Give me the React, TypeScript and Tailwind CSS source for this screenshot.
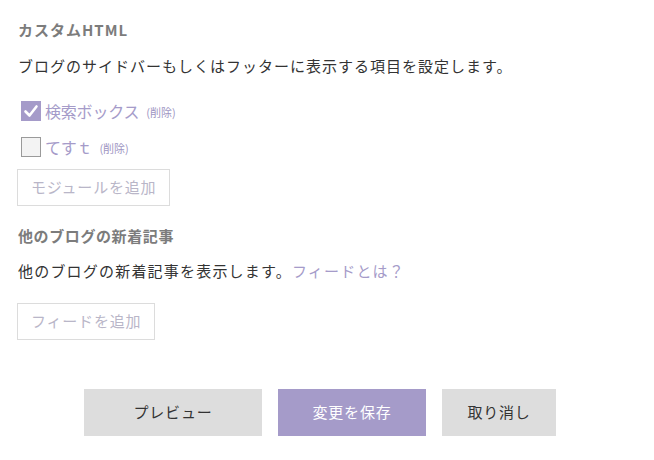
import React from "react";

const FONT = { fontFamily: '"Noto Sans CJK JP", "Noto Sans", sans-serif' };

function CheckRow({ label, checked }: { label: string; checked?: boolean }) {
  return (
    <div className="flex items-center h-[20px]">
      {checked ? (
        <span className="w-[20px] h-[20px] ml-[3px] bg-[#a59bc9] flex items-center justify-center">
          <svg width="16" height="16" viewBox="0 0 16 16">
            <path d="M2.5 8.5 L6.5 12.5 L13.5 3.5" fill="none" stroke="#fff" strokeWidth="2.6" strokeLinecap="round" strokeLinejoin="round" />
          </svg>
        </span>
      ) : (
        <span className="w-[20px] h-[20px] ml-[3px] bg-[#f3f3f3] border border-[#9a9a9a]" />
      )}
      <span className="ml-[4px] text-[16px] leading-[20px] text-[#a59bc9] tracking-[-0.2px]">{label}</span>
      <span className="ml-[7px] text-[11px] leading-[20px] text-[#9d94c2] mt-[2px]">(削除)</span>
    </div>
  );
}

export default function App() {
  return (
    <div className="w-[654px] h-[460px] bg-white px-[18px] flex flex-col" style={FONT}>
      <div className="mt-[20px] text-[15px] leading-[20px] font-bold tracking-[1px] text-[#7c7c7c]">カスタムHTML</div>
      <p className="mt-[16px] text-[15px] leading-[20px] tracking-[1px] text-[#333]">
        ブログのサイドバーもしくはフッターに表示する項目を設定します。
      </p>
      <div className="mt-[25px] flex flex-col gap-[16px]">
        <CheckRow label="検索ボックス" checked />
        <CheckRow label="てすｔ" />
      </div>
      <button className="mt-[12px] self-start -ml-px h-[37px] px-[13px] border border-[#dcdcdc] bg-white text-[15px] tracking-[0.8px] text-[#b9b6c8]">
        モジュールを追加
      </button>

      <div className="mt-[20px] text-[15px] leading-[20px] font-bold tracking-[0.6px] text-[#7c7c7c]">他のブログの新着記事</div>
      <p className="mt-[15px] text-[15px] leading-[20px] tracking-[1.2px] text-[#333]">
        他のブログの新着記事を表示します。<span className="text-[#a59bc9]">フィードとは？</span>
      </p>
      <button className="mt-[22px] self-start -ml-px h-[37px] px-[13px] border border-[#dcdcdc] bg-white text-[15px] tracking-[0.8px] text-[#b9b6c8]">
        フィードを追加
      </button>

      <div className="mt-[49px] flex gap-[16px] pl-[66px]">
        <button className="w-[178px] h-[47px] bg-[#dddddd] text-[15px] tracking-[0.8px] text-[#333]">プレビュー</button>
        <button className="w-[148px] h-[47px] bg-[#a59bc9] text-[15px] tracking-[0.8px] text-white">変更を保存</button>
        <button className="w-[114px] h-[47px] bg-[#dddddd] text-[15px] tracking-[0.8px] text-[#333]">取り消し</button>
      </div>
    </div>
  );
}
